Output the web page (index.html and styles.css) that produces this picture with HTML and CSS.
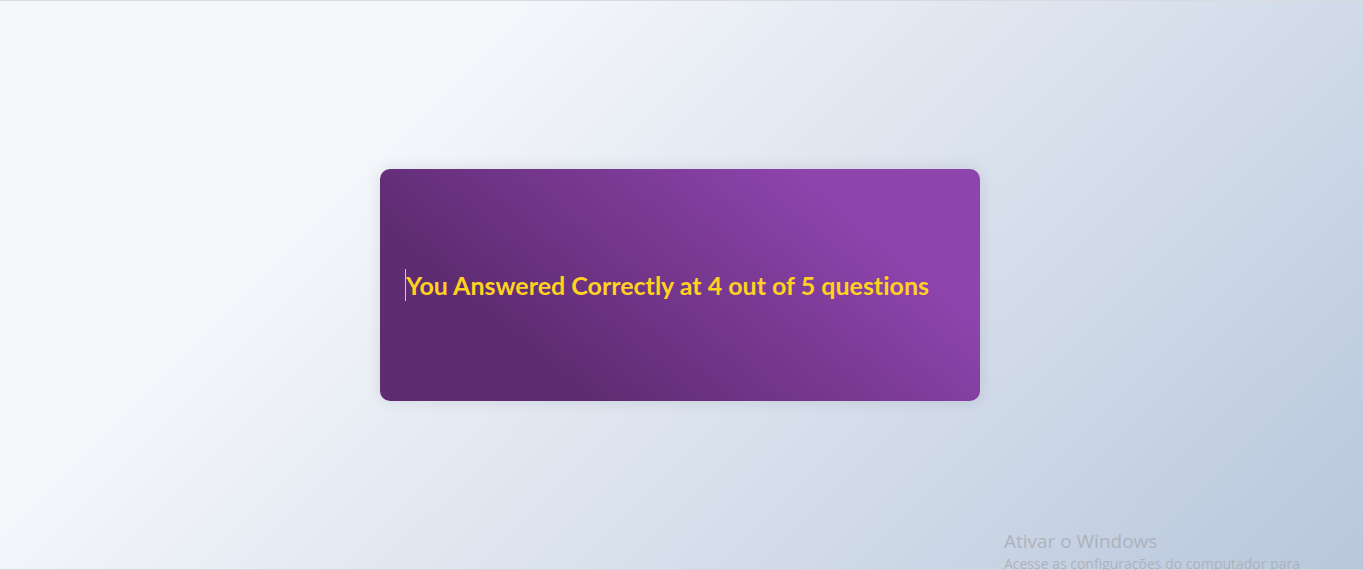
FILE: index.html
```html
<!DOCTYPE html>
<html lang="en">
<head>
<meta charset="utf-8">
<title>Quiz result</title>
<link rel="stylesheet" href="styles.css">
</head>
<body>
<main class="page">
  <section class="result-card">
    <h1 class="result-text">You Answered Correctly at 4 out of 5 questions</h1>
  </section>
</main>
<aside class="watermark" lang="pt">
  <p class="watermark-title">Ativar o Windows</p>
  <p class="watermark-text">Acesse as configurações do computador para</p>
</aside>
</body>
</html>
```
FILE: styles.css
```css
* {
  box-sizing: border-box;
}

body {
  margin: 0;
  font-family: "Open Sans", "Noto Sans", sans-serif;
}

.page {
  min-height: 100vh;
  display: flex;
  align-items: center;
  justify-content: center;
  padding: 24px 27px 24px 24px;
  border-top: 1px solid #d9dadf;
  border-bottom: 1px solid #d5d6da;
  background: linear-gradient(135deg, #f5f7fb 26%, #b8c7dc 100%);
}

.result-card {
  display: flex;
  align-items: center;
  width: 100%;
  max-width: 600px;
  min-height: 232px;
  padding: 25px;
  border-radius: 10px;
  background: linear-gradient(40deg, #5f2c72 25%, #8e44ad 80%);
  box-shadow: 0 0 16px rgba(0, 0, 0, 0.1);
}

.result-text {
  margin: 0;
  border-left: 1px solid #ffd21f;
  color: #ffd21f;
  font-family: Lato, "Open Sans", sans-serif;
  font-size: 25px;
  font-weight: 700;
  font-variant-ligatures: none;
  line-height: 32px;
}

.watermark {
  position: absolute;
  right: 63px;
  bottom: 0;
  height: 42px;
  overflow: hidden;
  color: #adb2bb;
}

.watermark p {
  margin: 0;
}

.watermark-title {
  font-size: 19px;
  line-height: 26px;
}

.watermark-text {
  font-size: 14px;
  line-height: 20px;
}
```
